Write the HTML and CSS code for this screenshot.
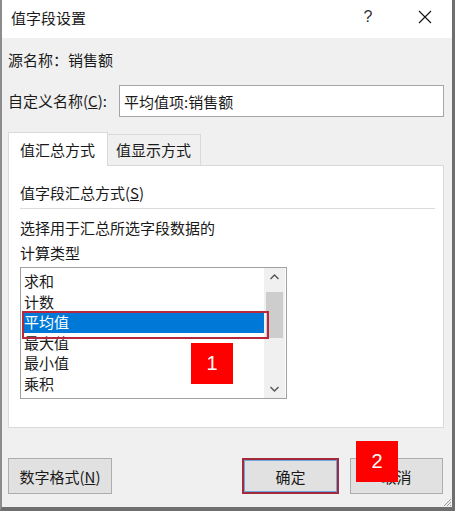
FILE: index.html
```html
<!DOCTYPE html>
<html lang="zh-CN">
<head>
  <meta charset="UTF-8">
  <title>值字段设置</title>
  <link rel="stylesheet" href="styles.css">
</head>
<body>
<div class="window">
  <!-- Title bar -->
  <div class="titlebar">
    <span class="title">值字段设置</span>
    <span class="tb-btn help">?</span>
    <span class="tb-btn close">
      <svg width="14" height="14" viewBox="0 0 14 14"><path d="M1 1L13 13M13 1L1 13" stroke="#111" stroke-width="1.1" fill="none"/></svg>
    </span>
  </div>

  <div class="source-row">源名称：销售额</div>

  <div class="name-row">
    <label for="custom">自定义名称(<u>C</u>):</label>
    <input type="text" id="custom" value="平均值项:销售额">
  </div>

  <!-- Tabs -->
  <div class="tabs">
    <div class="tab active">值汇总方式</div>
    <div class="tab">值显示方式</div>
  </div>

  <div class="panel">
    <div class="section">值字段汇总方式(<u>S</u>)</div>
    <div class="rule"></div>
    <div class="hint">选择用于汇总所选字段数据的</div>
    <div class="hint">计算类型</div>

    <div class="listbox">
      <div class="items">
        <div class="item">求和</div>
        <div class="item">计数</div>
        <div class="item selected">平均值</div>
        <div class="item">最大值</div>
        <div class="item">最小值</div>
        <div class="item">乘积</div>
      </div>
      <div class="scrollbar">
        <svg class="arrow" width="21" height="18" viewBox="0 0 21 18"><path d="M6.5 11L10.5 7L14.5 11" stroke="#555" stroke-width="1.4" fill="none"/></svg>
        <div class="track"><div class="thumb"></div></div>
        <svg class="arrow" width="21" height="18" viewBox="0 0 21 18"><path d="M6.5 7L10.5 11L14.5 7" stroke="#555" stroke-width="1.4" fill="none"/></svg>
      </div>
      <div class="mark-box"></div>
      <div class="badge badge-1">1</div>
    </div>
  </div>

  <!-- Bottom buttons -->
  <div class="buttons">
    <button class="btn format">数字格式(<u>N</u>)</button>
    <span class="spacer"></span>
    <button class="btn ok">确定</button>
    <button class="btn cancel">取消</button>
    <div class="badge badge-2">2</div>
  </div>

  <svg class="grip" width="10" height="10" viewBox="0 0 10 10"><path d="M9 2L2 9M9 5L5 9M9 8L8 9" stroke="#999" stroke-width="1" fill="none"/></svg>
</div>
</body>
</html>
```

FILE: styles.css
```css
/* General reset */
* {
  margin: 0;
  padding: 0;
  box-sizing: border-box;
}

body {
  font-family: "Noto Sans CJK SC", "Noto Sans", sans-serif;
  font-size: 15px;
  color: #1a1a1a;
  background: #fff;
}

.window {
  position: relative;
  width: 455px;
  height: 511px;
  background: #f0f0f0;
  border-left: 2px solid #8c8c8c;
  border-right: 3px solid #6f6f6f;
  border-bottom: 4px solid #6f6f6f;
  display: flex;
  flex-direction: column;
}

.titlebar {
  height: 38px;
  background: #fff;
  display: flex;
  align-items: center;
  padding-left: 9px;
  padding-right: 4px;
}

.title {
  flex: 1;
  line-height: 20px;
  margin-top: -3px;
}

.tb-btn {
  width: 46px;
  height: 32px;
  display: flex;
  align-items: center;
  justify-content: center;
  margin-top: -4px;
}

.help {
  font-family: "Liberation Sans", sans-serif;
  font-size: 16px;
  color: #333;
  margin-right: 11px;
}

.source-row {
  margin-top: 12px;
  padding-left: 6px;
  line-height: 20px;
}

.name-row {
  margin-top: 15px;
  padding-left: 6px;
  padding-right: 8px;
  display: flex;
  align-items: center;
}

.name-row label {
  width: 111px;
  line-height: 20px;
}

.name-row input {
  flex: 1;
  height: 32px;
  border: 1px solid #a5a5a5;
  background: #fff;
  font: inherit;
  color: #1a1a1a;
  padding: 0 4px;
  outline: none;
}

.tabs {
  margin-top: 15px;
  padding-left: 6px;
  display: flex;
  align-items: flex-end;
  height: 33px;
}

.tab {
  height: 31px;
  padding: 0 9px 0 8px;
  border: 1px solid #d9d9d9;
  border-bottom: none;
  line-height: 30px;
  background: #f0f0f0;
  margin-left: -1px;
}

.tab.active {
  position: relative;
  z-index: 1;
  height: 34px;
  margin-bottom: -1px;
  margin-left: 0;
  padding: 0 12px 0 11px;
  background: #fff;
  line-height: 34px;
}

.panel {
  margin-left: 6px;
  margin-right: 8px;
  height: 263px;
  background: #fff;
  border: 1px solid #d9d9d9;
  padding: 17px 8px 0 11px;
}

.section {
  line-height: 20px;
}

.rule {
  height: 1px;
  background: #dcdcdc;
  margin: 5px 0 9px;
}

.hint {
  line-height: 20px;
  margin-bottom: 5px;
}

.listbox {
  position: relative;
  width: 267px;
  height: 132px;
  border: 1px solid #a0a0a0;
  display: flex;
  padding: 3px 1px 0 1px;
  margin-top: -1px;
}

.items {
  flex: 1;
}

.item {
  height: 20.6px;
  line-height: 20px;
  padding-left: 2px;
}

.item.selected {
  background: #0078d7;
  color: #fff;
}

.scrollbar {
  width: 21px;
  margin-top: -3px;
  background: #f0f0f0;
  display: flex;
  flex-direction: column;
}

.scrollbar .arrow {
  display: block;
}

.track {
  flex: 1;
  padding-top: 6px;
}

.thumb {
  height: 46px;
  background: #cdcdcd;
  margin: 0 2px;
}

.mark-box {
  position: absolute;
  left: 1px;
  top: 43px;
  width: 247px;
  height: 28px;
  border: 2px solid #b8283a;
}

.badge {
  position: absolute;
  width: 42px;
  height: 41px;
  background: #ff0000;
  color: #fff;
  font-family: "Liberation Sans", sans-serif;
  font-size: 20px;
  display: flex;
  align-items: center;
  justify-content: center;
}

.badge-1 {
  left: 170px;
  top: 75px;
}

.buttons {
  position: relative;
  margin-top: 30px;
  padding-left: 6px;
  padding-right: 9px;
  display: flex;
  height: 36px;
}

.btn {
  height: 36px;
  font: inherit;
  color: #1a1a1a;
  background: #e1e1e1;
  border: 1px solid #adadad;
}

.format {
  width: 104px;
}

.spacer {
  flex: 1;
}

.ok {
  width: 97px;
  border: 2px solid #a52a3e;
  box-shadow: inset 0 0 0 1px #6fa8dc;
  margin-right: 11px;
}

.cancel {
  width: 93px;
}

.badge-2 {
  left: 354px;
  top: -17px;
}

.grip {
  position: absolute;
  right: 0;
  bottom: 0;
}
```
